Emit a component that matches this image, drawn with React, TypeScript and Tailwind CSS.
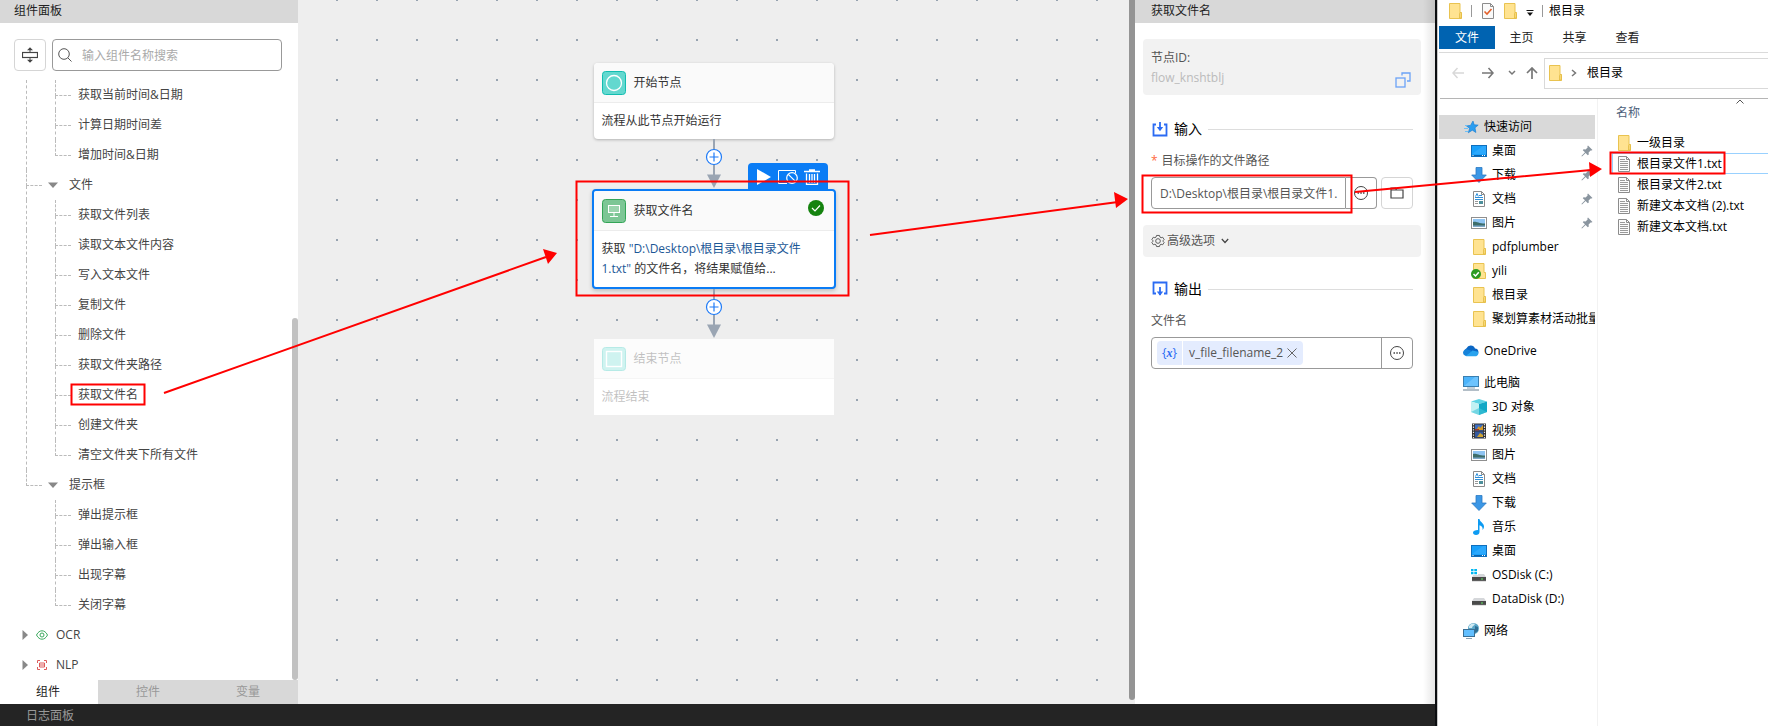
import React from "react";

/* ---------- small drawings ---------- */

type IconProps = { className?: string };

const Folder = ({ className = "h-4 w-4" }: IconProps) => (
  <svg viewBox="0 0 16 16" className={className}>
    <path d="M2.500.5h10.500v9h1.500v6H2.500z" fill="#ffe391" stroke="#e9c350" />
    <path d="M12.500 15v-4.500l1-1.500 1 1.500V15z" fill="#f7d775" stroke="#e3bb42" strokeWidth=".8" />
  </svg>
);

const TextFile = () => (
  <svg viewBox="0 0 16 16" className="h-4 w-4">
    <path d="M2.500.5h8l3 3v12h-11z" fill="#fcfcfc" stroke="#8c8c8c" />
    <path d="M10.500.5v3h3" fill="none" stroke="#8c8c8c" />
    <path d="M4 3.500h5M4 5.500h8M4 7.500h8M4 9.500h8M4 11.500h8M4 13.500h8" stroke="#9a9a9a" />
  </svg>
);

const Star = () => (
  <svg viewBox="0 0 16 16" className="h-4 w-4">
    <path d="M10 2l1.200 3.800 4 .3-3.200 2.700.9 4.700-3.600-2.300-4 2.600 1.300-4.500-3.300-2.500 4.200-.4z" fill="#2a9df0" stroke="#1479cf" strokeWidth=".6" />
    <path d="M2 6.500h2.500M1 9.500h4M2 12.500h3" stroke="#6fc0f5" />
  </svg>
);

const Desktop = () => (
  <svg viewBox="0 0 16 16" className="h-4 w-4">
    <rect x=".5" y="2.500" width="15" height="11" fill="#18a0fb" stroke="#0f6fbd" />
    <path d="M1 11L12 3h3v8z" fill="#3fb2ff" opacity=".5" />
    <path d="M1 12.500h14" stroke="#0b64ad" />
    <path d="M1.500 12.500h1M11 12.500h1M13 12.500h1" stroke="#fff" />
  </svg>
);

const Download = () => (
  <svg viewBox="0 0 16 16" className="h-4 w-4">
    <path d="M5 .5h6V8h4.300L8 15.500.7 8H5z" fill="#3b97e6" stroke="#2b78c2" strokeWidth=".8" />
  </svg>
);

const Document = () => (
  <svg viewBox="0 0 16 16" className="h-4 w-4">
    <path d="M2.500.5h8l3 3v12h-11z" fill="#fff" stroke="#8a8a8a" />
    <path d="M10.500.5v3h3" fill="none" stroke="#8a8a8a" />
    <path d="M4 6.500h8M8 4.500h3M4 8.500h8" stroke="#2f8fd8" />
    <path d="M4.500 5.500L6 2.500l1.300 3" fill="none" stroke="#2f8fd8" />
    <path d="M4 10.500h3M4 12.500h3" stroke="#999" />
    <rect x="8" y="10" width="4" height="3" fill="#4d8f9b" />
  </svg>
);

const Picture = () => (
  <svg viewBox="0 0 16 16" className="h-4 w-4">
    <rect x=".5" y="2.500" width="15" height="11" fill="#fff" stroke="#8f8f8f" />
    <rect x="2" y="4" width="12" height="8" fill="#8fc4f2" />
    <path d="M2 7c3-1 5 1.500 12 1.500V12H2z" fill="#3d6d6a" />
    <path d="M2 10.500h12V12H2z" fill="#7fa9c9" />
  </svg>
);

const SyncedFolder = () => (
  <svg viewBox="0 0 16 16" className="h-4 w-4">
    <path d="M2.500.5h10.500v9h1.500v6H2.500z" fill="#ffe391" stroke="#e9c350" />
    <circle cx="5" cy="11" r="5" fill="#2c9a1f" />
    <path d="M2.500 11l2 2 3.300-3.800" fill="none" stroke="#fff" strokeWidth="1.500" />
  </svg>
);

const Cloud = () => (
  <svg viewBox="0 0 16 16" className="h-4 w-4">
    <path d="M4 12.500a4 4 0 01-.5-7.300A4.600 4.600 0 0112 5.500a3.600 3.600 0 011 7z" fill="#0a66c4" />
    <path d="M2 12.500L9.500 7.500 15 8.800a3.200 3.200 0 01-1.800 4.400H3.500a3 3 0 01-1.500-.7z" fill="#29a3ee" />
    <path d="M0 10a3.500 3.500 0 014.500-3.500L9 8l-6 4.800A3.200 3.200 0 010 10z" fill="#1683da" />
  </svg>
);

const Computer = () => (
  <svg viewBox="0 0 16 16" className="h-4 w-4">
    <rect x=".5" y="1.500" width="15" height="10" fill="#4cb4fb" stroke="#3a7fb0" />
    <path d="M1 11L12 2h3v9z" fill="#83cdff" opacity=".6" />
    <path d="M4 13h8" stroke="#8aa2b3" />
    <path d="M0 15h16" stroke="#9aa9b5" strokeWidth="1.500" />
  </svg>
);

const Cube = () => (
  <svg viewBox="0 0 16 16" className="h-4 w-4">
    <path d="M8 0l8 2.500-8 2.500-8-2.500z" fill="#5fd4e4" />
    <path d="M0 2.500L8 5v11l-8-3z" fill="#c2f1f3" />
    <path d="M16 2.500L8 5v11l8-3z" fill="#12a8c6" />
    <path d="M0 13l8-4 8 4-8 3z" fill="#3fc5d8" opacity=".6" />
  </svg>
);

const Film = () => (
  <svg viewBox="0 0 16 16" className="h-4 w-4">
    <rect x="1" y=".5" width="14" height="15" fill="#333" />
    <path d="M2.500 1v14M13.500 1v14" stroke="#e5e5e5" strokeWidth="1.200" strokeDasharray="1.300 1.300" />
    <rect x="4" y="1.500" width="8" height="6" fill="#3c6fc4" />
    <rect x="4" y="8.500" width="8" height="6" fill="#35599e" />
    <path d="M5 7l3-4 1 2 3-3v5z" fill="#d69a26" />
    <path d="M4 6h4v1.500H4z" fill="#9c3b2c" />
    <path d="M6 14l3-4 3 2v2z" fill="#d0a42f" />
  </svg>
);

const Music = () => (
  <svg viewBox="0 0 16 16" className="h-4 w-4">
    <path d="M7 0h1.500c.3 3 4.500 4 4.500 7.500 0 1.500-.6 2.500-1.500 3.500.5-2.500-.5-4-3-4.800V13c0 1.800-1.500 3-3.500 3S2 15 2 13.500 4 11 7 11z" fill="#0d9bf2" />
  </svg>
);

const Disk = ({ system = false }: { system?: boolean }) => (
  <svg viewBox="0 0 16 16" className="h-4 w-4">
    <path d="M3 7h10l2 3H1z" fill="#d5d7da" />
    <rect x="1" y="10" width="14" height="4" fill="#4a4a4a" />
    <path d="M1 14.200h14" stroke="#bbb" strokeWidth=".6" />
    <rect x="10" y="11.500" width="2" height="1" fill="#5fe35f" />
    {system && (
      <>
        <rect x="0" y="1" width="7" height="7" fill="#fff" />
        <path d="M0 2h2.500v2.300H0zM3.300 2H6v2.300H3.300zM0 5h2.500v2.300H0zM3.300 5H6v2.300H3.300z" fill="#00b7f1" />
      </>
    )}
  </svg>
);

const Network = () => (
  <svg viewBox="0 0 16 16" className="h-4 w-4">
    <circle cx="10.500" cy="5.500" r="5.500" fill="#5aa6c8" />
    <path d="M6 3c2-3 5-3 6-2-1 2-3 2-3 4H6z" fill="#cfeaf3" />
    <path d="M12 3l3 1v4l-3 2z" fill="#2f6f95" />
    <rect x=".5" y="6.500" width="11" height="7" fill="#62bfff" stroke="#3a6f94" />
    <path d="M3 15.500h6" stroke="#8aa2b3" />
  </svg>
);

const Pin = () => (
  <svg viewBox="0 0 12 12" className="h-3 w-3">
    <path d="M7 .5l4.500 4.500-1 .6-.9-.2-2 2.200.2 1.900-1 .8-2.200-2.200L1 11.500l-.6-.5L4 7.300 1.800 5.200l.8-1 2 .2 2-2L6.400 1.300z" fill="#8a959f" />
  </svg>
);

const Connector = () => (
  <svg viewBox="0 0 44 50" className="relative h-[50px] w-11">
    <path d="M22 0v38" stroke="#9aa5b3" strokeWidth="2" />
    <path d="M15 35.500h14L22 49z" fill="#9aa5b3" />
    <circle cx="22" cy="18" r="7.500" fill="#fff" stroke="#1f7bf7" strokeWidth="1.200" />
    <path d="M17.500 18h9M22 13.500v9" stroke="#1f7bf7" strokeWidth="1.200" />
  </svg>
);

const More = () => (
  <svg viewBox="0 0 16 16" className="h-4 w-4">
    <circle cx="8" cy="8" r="6.500" fill="none" stroke="#444" />
    <path d="M4.500 8h1.500M7.300 8h1.500M10 8h1.500" stroke="#444" strokeWidth="1.500" />
  </svg>
);

/* ---------- component panel ---------- */

type TreeItem = { label: string; kind: "leaf" | "group"; last?: boolean; trunk?: boolean };

const treeItems: TreeItem[] = [
  { label: "获取当前时间&日期", kind: "leaf", trunk: true },
  { label: "计算日期时间差", kind: "leaf", trunk: true },
  { label: "增加时间&日期", kind: "leaf", trunk: true, last: true },
  { label: "文件", kind: "group", trunk: true },
  { label: "获取文件列表", kind: "leaf", trunk: true },
  { label: "读取文本文件内容", kind: "leaf", trunk: true },
  { label: "写入文本文件", kind: "leaf", trunk: true },
  { label: "复制文件", kind: "leaf", trunk: true },
  { label: "删除文件", kind: "leaf", trunk: true },
  { label: "获取文件夹路径", kind: "leaf", trunk: true },
  { label: "获取文件名", kind: "leaf", trunk: true },
  { label: "创建文件夹", kind: "leaf", trunk: true },
  { label: "清空文件夹下所有文件", kind: "leaf", trunk: true, last: true },
  { label: "提示框", kind: "group", trunk: true, last: true },
  { label: "弹出提示框", kind: "leaf" },
  { label: "弹出输入框", kind: "leaf" },
  { label: "出现字幕", kind: "leaf" },
  { label: "关闭字幕", kind: "leaf", last: true },
];

const Branch = ({ last }: { last?: boolean }) => (
  <span className="flex h-full w-4 flex-col">
    <span className="h-4 border-b border-l border-dashed border-[#bbb]" />
    <span className={"flex-1 " + (last ? "" : "border-l border-dashed border-[#bbb]")} />
  </span>
);

function ComponentPanel() {
  return (
    <aside className="flex w-[298px] shrink-0 flex-col bg-white">
      <h2 className="h-[23px] bg-[#d8d8d8] pl-3.5 leading-[22px] text-[#222]">组件面板</h2>
      <div className="flex gap-1.5 pt-4 pr-4 pb-2 pl-3.5">
        <button aria-label="折叠" className="flex h-8 w-8 items-center justify-center rounded border border-[#d5d5d5]">
          <svg viewBox="0 0 16 16" className="h-4 w-4" fill="none" stroke="#444">
            <rect x=".5" y="5.500" width="15" height="5" strokeWidth="1.200" />
            <path d="M8 1v4M8 11v4" />
            <path d="M5 3.200L8 .3l3 2.900zM5 12.800l3 2.900 3-2.900z" fill="#444" stroke="none" />
          </svg>
        </button>
        <label className="flex h-8 flex-1 items-center gap-2.5 rounded border border-[#999] px-[5px]">
          <svg viewBox="0 0 14 14" className="h-3.5 w-3.5 shrink-0" fill="none" stroke="#555">
            <circle cx="6" cy="6" r="5.300" />
            <path d="M9.800 9.800l3.700 3.700" />
          </svg>
          <input aria-label="搜索组件" placeholder="输入组件名称搜索" className="w-full pt-0.5 outline-none placeholder:text-[#aaa]" />
        </label>
      </div>
      <div className="relative flex-1 pt-px">
        <ul className="text-[#444]">
          {treeItems.map((item) => (
            <li key={item.label} className="flex h-[30px] items-center pl-[26px]">
              {item.kind === "group" ? (
                <>
                  <Branch last={item.last} />
                  <button className="ml-1.5 flex items-center gap-[11px]">
                    <svg viewBox="0 0 10 6" className="h-1.5 w-2.5">
                      <path d="M0 .5h10L5 6z" fill="#888" />
                    </svg>
                    {item.label}
                  </button>
                </>
              ) : (
                <>
                  <span className={"h-full w-[29px] " + (item.trunk ? "border-l border-dashed border-[#bbb]" : "")} />
                  <Branch last={item.last} />
                  <button className="ml-[7px]">{item.label}</button>
                </>
              )}
            </li>
          ))}
          <li className="flex h-[30px] items-center gap-2 pl-[22px]">
            <svg viewBox="0 0 6 10" className="h-2.5 w-1.5">
              <path d="M.5 0v10L6 5z" fill="#888" />
            </svg>
            <svg viewBox="0 0 12 12" className="h-3 w-3" fill="none" stroke="#3aa95c">
              <path d="M.5 6C2 3 4 1.800 6 1.800s4 1.200 5.500 4.200C10 9 8 10.200 6 10.200S2 9 .5 6z" />
              <circle cx="6" cy="6" r="2" />
            </svg>
            <button>OCR</button>
          </li>
          <li className="flex h-[30px] items-center gap-2 pl-[22px]">
            <svg viewBox="0 0 6 10" className="h-2.5 w-1.5">
              <path d="M.5 0v10L6 5z" fill="#888" />
            </svg>
            <svg viewBox="0 0 12 12" className="h-3 w-3" fill="none" stroke="#dd5b5b">
              <path d="M1.500 4V1.500H4M8 1.500h2.500V4M10.500 8v2.500H8M4 10.500H1.500V8M3.500 4h5v4h-5zM3 6h6" />
            </svg>
            <button>NLP</button>
          </li>
        </ul>
        <div className="absolute right-0 bottom-0 h-[362px] w-1.5 rounded-full bg-[#c1c1c1]" />
      </div>
      <div className="flex h-6 bg-[#d8d8d8] text-[#999]">
        <button className="w-[98px] bg-white pr-0.5 text-[#222]">组件</button>
        <button className="flex-1">控件</button>
        <button className="flex-1">变量</button>
      </div>
    </aside>
  );
}

/* ---------- flow canvas ---------- */

function Canvas() {
  return (
    <main className="relative flex flex-1 flex-col items-center bg-[#eee] pt-[63px]">
      <svg className="absolute inset-0 h-full w-full" aria-hidden="true">
        <defs>
          <pattern id="dots" width="40" height="40" patternUnits="userSpaceOnUse" patternTransform="translate(0 1)">
            <rect x="38" y="38" width="2" height="2" fill="#97a3b0" />
          </pattern>
        </defs>
        <rect width="100%" height="100%" fill="url(#dots)" />
      </svg>

      <section className="relative h-[76px] w-60 rounded bg-white shadow-[0_1px_3px_rgba(0,0,0,0.25)]">
        <header className="flex h-10 items-center gap-2 rounded-t border-b border-[#ececec] bg-[#fafafa] px-2">
          <svg viewBox="0 0 24 24" className="h-6 w-6">
            <rect x=".5" y=".5" width="23" height="23" rx="3" fill="#63d8cf" stroke="#12bdb0" />
            <circle cx="12" cy="12" r="7.500" fill="none" stroke="#fff" strokeWidth="1.300" />
          </svg>
          开始节点
        </header>
        <p className="px-2 leading-9">流程从此节点开始运行</p>
      </section>

      <Connector />

      <section className="relative h-[100px] w-[244px] rounded border-2 border-[#0a7cf5] bg-white shadow-[0_2px_4px_rgba(0,0,0,0.2)]">
        <div className="absolute right-1.5 bottom-full flex h-7 w-20 items-center justify-center gap-1.5 rounded-t bg-[#0a7cf5]">
          <button aria-label="运行">
            <svg viewBox="0 0 16 16" className="h-4 w-4">
              <path d="M1 0l14 8-14 8z" fill="#fff" />
            </svg>
          </button>
          <button aria-label="禁用">
            <svg viewBox="0 0 20 16" className="h-4 w-5" fill="none" stroke="#fff">
              <path d="M9 14.500H.5v-13h17V4" />
              <circle cx="14" cy="9" r="5.300" strokeWidth="1.200" />
              <path d="M10.300 5.300l7.400 7.400" strokeWidth="1.200" />
            </svg>
          </button>
          <button aria-label="删除">
            <svg viewBox="0 0 16 16" className="h-4 w-4" fill="none" stroke="#fff" strokeWidth="1.300">
              <path d="M0 2.500h16M5 1h6M2.500 4.500v10.800h11V4.500M5.500 5v9M8 5v9M10.500 5v9" />
            </svg>
          </button>
        </div>
        <header className="flex h-10 items-center gap-2 rounded-t border-b border-[#ececec] bg-[#fafafa] px-2">
          <svg viewBox="0 0 24 24" className="h-6 w-6">
            <rect x=".5" y=".5" width="23" height="23" rx="3" fill="#7cc695" stroke="#33a557" />
            <rect x="6.500" y="6.500" width="11" height="7" fill="#9bd4ae" stroke="#fff" />
            <path d="M7 13.500h10M12 13.500v4M8 17.500h8" stroke="#fff" />
          </svg>
          <span className="flex-1">获取文件名</span>
          <svg viewBox="0 0 16 16" className="mr-0.5 mb-1.5 h-4 w-4">
            <circle cx="8" cy="8" r="8" fill="#15830f" />
            <path d="M4 8l3 3 5-5.500" fill="none" stroke="#fff" strokeWidth="1.200" />
          </svg>
        </header>
        <p className="px-2 pt-2 leading-5">
          获取 <span className="text-[#1b5796]">"D:\Desktop\根目录\根目录文件<br />1.txt"</span> 的文件名，将结果赋值给...
        </p>
      </section>

      <Connector />

      <section className="relative h-[76px] w-60 bg-white">
        <div className="opacity-30">
          <header className="flex h-10 items-center gap-2 border-b border-[#e0e0e0] bg-[#f7f7f7] px-2">
            <svg viewBox="0 0 24 24" className="h-6 w-6">
              <rect x=".5" y=".5" width="23" height="23" rx="3" fill="#63d8cf" stroke="#12bdb0" />
              <rect x="4.500" y="4.500" width="15" height="15" fill="none" stroke="#fff" strokeWidth="1.400" />
            </svg>
            结束节点
          </header>
          <p className="px-2 leading-9">流程结束</p>
        </div>
      </section>
    </main>
  );
}

/* ---------- node properties ---------- */

const SectionTitle = ({ children, out = false }: { children: React.ReactNode; out?: boolean }) => (
  <h3 className="flex h-5 items-center gap-1.5 px-2 text-sm text-black">
    <svg viewBox="0 0 16 16" className="ml-px h-4 w-4" fill="none" stroke="#2b6bf3" strokeWidth="1.800">
      {out ? (
        <>
          <path d="M4 12.500H1.500V1.500h13v11H12" />
          <path d="M8 6v8" />
          <path d="M4.800 10.500h6.400L8 14.800z" fill="#2b6bf3" stroke="none" />
        </>
      ) : (
        <>
          <path d="M4 3.500H1.500v11h13v-11H12" />
          <path d="M8 1v7" />
          <path d="M4.800 6h6.400L8 10.300z" fill="#2b6bf3" stroke="none" />
        </>
      )}
    </svg>
    {children}
    <span className="h-px flex-1 bg-[#ddd]" />
  </h3>
);

function PropertiesPanel() {
  return (
    <aside className="relative flex w-[300px] shrink-0 flex-col bg-white text-[#555]">
      <h2 className="h-[23px] bg-[#d8d8d8] pl-4 leading-[22px] text-[#222]">获取文件名</h2>
      <div className="flex flex-col px-2 pt-4 pr-3.5">
        <div className="flex h-14 items-end justify-between rounded bg-[#f2f2f2] px-2 pb-[7px]">
          <dl className="leading-5">
            <dt>节点ID:</dt>
            <dd className="text-[#bbb]">flow_knshtblj</dd>
          </dl>
          <button aria-label="复制" className="mr-0.5">
            <svg viewBox="0 0 16 16" className="h-4 w-4" fill="none" stroke="#6ba2f6" strokeWidth="1.300">
              <rect x="1" y="6" width="9" height="9" />
              <path d="M7 3.500V1h8v8h-3" />
            </svg>
          </button>
        </div>
        <div className="mt-6">
          <SectionTitle>输入</SectionTitle>
        </div>
        <label htmlFor="path" className="mt-3 flex h-5 items-center gap-1 px-2">
          <span className="text-[#ff6a3d]">*</span>目标操作的文件路径
        </label>
        <div className="mt-1.5 flex h-8 px-2">
          <input id="path" defaultValue="D:\Desktop\根目录\根目录文件1." className="w-0 flex-1 rounded-l border border-[#999] pt-0.5 pl-2 outline-none" />
          <button aria-label="更多" className="flex w-[31px] items-center justify-center rounded-r border border-l-0 border-[#999]">
            <More />
          </button>
          <button aria-label="浏览" className="ml-1 flex w-8 items-center justify-center rounded border border-[#d5d5d5]">
            <svg viewBox="0 0 14 12" className="h-3 w-3.5" fill="none" stroke="#444" strokeWidth="1.200">
              <path d="M1 3h12v8H1zM1 3V1h4.500l1 2" />
            </svg>
          </button>
        </div>
        <button className="mt-4 flex h-8 items-center rounded bg-[#f2f2f2] px-2">
          <svg viewBox="0 0 24 24" className="mr-0.5 h-3.5 w-3.5" fill="none" stroke="#555" strokeWidth="1.600">
            <path d="M9.500 2.500h5l.8 2.700 2 1.200 2.800-.8 2.400 4-2 2v.8l2 2-2.400 4-2.800-.8-2 1.200-.8 2.700h-5l-.8-2.700-2-1.200-2.800.8-2.400-4 2-2v-.8l-2-2 2.400-4 2.800.8 2-1.200z" />
            <circle cx="12" cy="12" r="4" />
          </svg>
          高级选项
          <svg viewBox="0 0 8 6" className="ml-1.5 h-1.5 w-2" fill="none" stroke="#444" strokeWidth="1.200">
            <path d="M.8 1L4 4.500 7.200 1" />
          </svg>
        </button>
        <div className="mt-[22px]">
          <SectionTitle out>输出</SectionTitle>
        </div>
        <span className="mt-3 flex h-5 items-center px-2">文件名</span>
        <div className="mx-2 mt-1.5 flex h-8 items-center rounded border border-[#999] pl-[5px]">
          <span className="flex h-6 w-[25px] items-center justify-center rounded-l-sm bg-[#e4ecfe] text-[#2b6bf3]">
            {"{"}
            <b className="font-['Liberation_Serif'] italic">x</b>
            {"}"}
          </span>
          <span className="ml-px flex h-6 items-center gap-1 rounded-r-sm bg-[#e4ecfe] px-1.5">
            v_file_filename_2
            <button aria-label="移除">
              <svg viewBox="0 0 10 10" className="h-2.5 w-2.5" stroke="#666">
                <path d="M.5.5l9 9M9.500.5l-9 9" />
              </svg>
            </button>
          </span>
          <button aria-label="更多变量" className="ml-auto flex h-full w-[31px] items-center justify-center border-l border-[#999]">
            <More />
          </button>
        </div>
      </div>
      <div className="pointer-events-none absolute inset-y-0 right-0 w-3 bg-linear-to-r from-transparent to-black/10" />
    </aside>
  );
}

/* ---------- file explorer ---------- */

type Place = { label: string; icon: React.ReactNode; root?: boolean; pinned?: boolean; active?: boolean; gap?: boolean };

const places: Place[] = [
  { label: "快速访问", icon: <Star />, root: true, active: true },
  { label: "桌面", icon: <Desktop />, pinned: true },
  { label: "下载", icon: <Download />, pinned: true },
  { label: "文档", icon: <Document />, pinned: true },
  { label: "图片", icon: <Picture />, pinned: true },
  { label: "pdfplumber", icon: <Folder /> },
  { label: "yili", icon: <SyncedFolder /> },
  { label: "根目录", icon: <Folder /> },
  { label: "聚划算素材活动批量", icon: <Folder /> },
  { label: "OneDrive", icon: <Cloud />, root: true, gap: true },
  { label: "此电脑", icon: <Computer />, root: true, gap: true },
  { label: "3D 对象", icon: <Cube /> },
  { label: "视频", icon: <Film /> },
  { label: "图片", icon: <Picture /> },
  { label: "文档", icon: <Document /> },
  { label: "下载", icon: <Download /> },
  { label: "音乐", icon: <Music /> },
  { label: "桌面", icon: <Desktop /> },
  { label: "OSDisk (C:)", icon: <Disk system /> },
  { label: "DataDisk (D:)", icon: <Disk /> },
  { label: "网络", icon: <Network />, root: true, gap: true },
];

const files = [
  { name: "一级目录", folder: true },
  { name: "根目录文件1.txt", selected: true },
  { name: "根目录文件2.txt" },
  { name: "新建文本文档 (2).txt" },
  { name: "新建文本文档.txt" },
];

function Explorer() {
  return (
    <section className="flex w-[333px] shrink-0 border-l-2 border-[#0b0d10] bg-white text-black">
      <div className="flex min-w-0 flex-1 flex-col border-l border-[#c8c8c8] pl-px">
        <header className="flex h-[26px] items-center pb-1 pl-2">
          <Folder />
          <span className="mx-2 h-3 w-px bg-[#999]" />
          <svg viewBox="0 0 16 16" className="h-4 w-4">
            <path d="M2.500.5h8l3 3v12h-11z" fill="#fafafa" stroke="#8c8c8c" />
            <path d="M10.500.5v3h3" fill="none" stroke="#8c8c8c" />
            <path d="M4.500 8.500L7 11l4.500-5" fill="none" stroke="#e2602b" strokeWidth="1.600" />
          </svg>
          <span className="ml-1.5 flex"><Folder /></span>
          <svg viewBox="0 0 8 6" className="mt-1 ml-2 h-1.5 w-2">
            <path d="M.5.500h7" stroke="#111" />
            <path d="M1 2.500h6L4 6z" fill="#111" />
          </svg>
          <span className="mr-1.5 ml-2 h-3 w-px bg-[#999]" />
          <h2>根目录</h2>
        </header>
        <nav className="flex h-[27px] items-start border-b border-[#dadada] text-[#222]">
          <button className="h-[23px] w-14 bg-[#0063b1] text-white">文件</button>
          <button className="h-[23px] w-[53px] pt-px">主页</button>
          <button className="h-[23px] w-[53px] pt-px">共享</button>
          <button className="h-[23px] w-[53px] pt-px">查看</button>
        </nav>
        <div className="ml-px flex h-[46px] items-center border-b border-[#b5b5b5] pb-[5px] pl-3">
          <button aria-label="后退">
            <svg viewBox="0 0 12 12" className="h-3 w-3" fill="none" stroke="#d8d8d8" strokeWidth="1.500">
              <path d="M12 6H1M5.500 1L1 6l4.500 5" />
            </svg>
          </button>
          <button aria-label="前进" className="ml-[18px]">
            <svg viewBox="0 0 12 12" className="h-3 w-3" fill="none" stroke="#777" strokeWidth="1.600">
              <path d="M0 6h11M6.500 1L11 6l-4.500 5" />
            </svg>
          </button>
          <button aria-label="历史" className="ml-3.5">
            <svg viewBox="0 0 8 6" className="h-1.5 w-2" fill="none" stroke="#777" strokeWidth="1.500">
              <path d="M1 1l3 3 3-3" />
            </svg>
          </button>
          <button aria-label="上移" className="ml-2.5">
            <svg viewBox="0 0 12 12" className="h-3 w-3" fill="none" stroke="#777" strokeWidth="1.700">
              <path d="M6 12V1M1 6l5-5 5 5" />
            </svg>
          </button>
          <div className="ml-1.5 flex h-[31px] flex-1 items-center border border-r-0 border-[#d9d9d9] pl-0.5">
            <Folder />
            <svg viewBox="0 0 6 8" className="ml-2 h-2 w-1.5" fill="none" stroke="#777" strokeWidth="1.500">
              <path d="M1 1l3.500 3L1 7" />
            </svg>
            <span className="ml-2.5">根目录</span>
          </div>
        </div>
        <div className="flex flex-1">
          <ul className="w-[159px] shrink-0 border-r border-[#f2f2f2] pt-4 pr-0.5">
            {places.map((p, i) => (
              <li key={i} className={p.gap ? "mt-2" : ""}>
                <button
                  className={
                    "flex h-6 w-full items-center gap-[5px] overflow-hidden whitespace-nowrap " +
                    (p.active ? "bg-[#d9d9d9] " : "") +
                    (p.root ? "pl-6" : "pl-8")
                  }
                >
                  <span className="shrink-0">{p.icon}</span>
                  <span>{p.label}</span>
                  {p.pinned && (
                    <span className="mr-0.5 ml-auto">
                      <Pin />
                    </span>
                  )}
                </button>
              </li>
            ))}
          </ul>
          <div className="relative flex-1 pl-3.5">
            <svg viewBox="0 0 8 5" className="absolute top-0 left-[138px] h-[5px] w-2" fill="none" stroke="#555">
              <path d="M.5 4.500L4 1l3.500 3.500" />
            </svg>
            <table className="w-full border-separate border-spacing-0 text-left">
              <thead>
                <tr className="h-[33px] align-top">
                  <th className="pt-1 pl-1 leading-5 font-normal text-[#4c607a]">名称</th>
                </tr>
              </thead>
              <tbody>
                {files.map((f) => (
                  <tr key={f.name}>
                    <td className="p-0">
                      <span
                        className={
                          "flex h-[21px] items-center gap-[5px] border-y border-l pl-[3px] " +
                          (f.selected ? "border-[#99d1ff]" : "border-transparent")
                        }
                      >
                        {f.folder ? <Folder /> : <TextFile />}
                        {f.name}
                      </span>
                    </td>
                  </tr>
                ))}
              </tbody>
            </table>
          </div>
        </div>
      </div>
    </section>
  );
}

/* ---------- red walkthrough marks over both windows ---------- */

const Marks = () => (
  <svg viewBox="0 0 1768 726" className="pointer-events-none absolute top-0 left-0 h-[726px] w-[1768px]" fill="none" stroke="#f00" strokeWidth="2">
    <rect x="71.500" y="384.500" width="73" height="20" />
    <rect x="576.500" y="181.500" width="272" height="114" />
    <rect x="1142.500" y="175.500" width="209" height="37" />
    <rect x="1610.500" y="152.500" width="114" height="21" />
    <path d="M164 393L546 257M870 235l248-33M1355 192l236-22" />
    <path d="M557 253l-14-4 5 15zM1128 199l-14-7 2 16zM1602 169l-13-7 1 15z" fill="#f00" stroke="none" />
  </svg>
);

export default function App() {
  return (
    <div className="relative flex min-h-screen overflow-hidden font-['Open_Sans','Noto_Sans_CJK_SC',sans-serif] text-xs text-[#333]">
      <div className="flex min-w-0 flex-1 flex-col">
        <div className="flex flex-1">
          <ComponentPanel />
          <Canvas />
          <div className="w-1.5 shrink-0 bg-[#eee] pb-1">
            <div className="h-full rounded-b-full bg-[#949494]" />
          </div>
          <PropertiesPanel />
        </div>
        <footer className="h-[22px] bg-[#242424] pl-[26px] leading-6 text-[#999]">日志面板</footer>
      </div>
      <Explorer />
      <Marks />
    </div>
  );
}
